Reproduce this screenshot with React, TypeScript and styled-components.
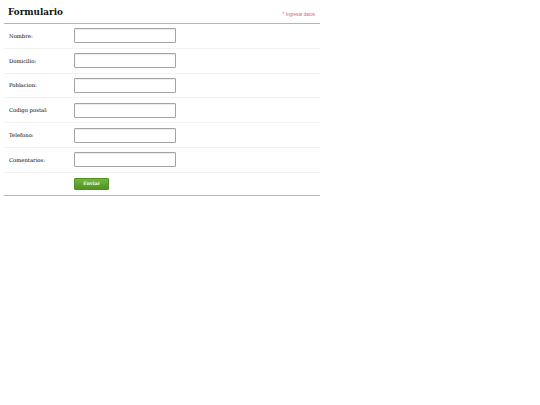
import React from 'react';
import styled, { createGlobalStyle } from 'styled-components';

const GlobalStyle = createGlobalStyle`
  html, body {
    margin: 0;
    padding: 0;
    background: #ffffff;
  }
  body {
    font-family: Georgia, "DejaVu Serif", "Liberation Serif", serif;
  }
`;

const fields = ['Nombre:', 'Domicilio:', 'Poblacion:', 'Codigo postal:', 'Telefono:', 'Comentarios:'];

const App: React.FC = () => {
  return (
    <>
      <GlobalStyle />
      <Page>
        <Form onSubmit={(e) => e.preventDefault()}>
          <Header>
            <Title>Formulario</Title>
            <Hint>* Ingresar datos</Hint>
          </Header>
          {fields.map((label) => (
            <Row key={label}>
              <Label>{label}</Label>
              <Input type="text" />
            </Row>
          ))}
          <ButtonRow>
            <SubmitButton type="submit">Enviar</SubmitButton>
          </ButtonRow>
        </Form>
      </Page>
    </>
  );
};

export default App;

const Page = styled.div`
  padding: 0 4px;
`;

const Form = styled.form`
  width: 316px;
  display: flex;
  flex-direction: column;
  border-bottom: 1px solid #b5b5b5;
`;

const Header = styled.div`
  display: flex;
  align-items: center;
  justify-content: space-between;
  height: 23px;
  padding: 0 5px 0 4px;
  border-bottom: 1px solid #b5b5b5;
`;

const Title = styled.h1`
  margin: 0;
  font-family: "DejaVu Serif", Georgia, serif;
  font-size: 8.8px;
  font-weight: bold;
  color: #111;
`;

const Hint = styled.span`
  font-family: "Liberation Sans", Arial, sans-serif;
  font-size: 4.6px;
  color: #e06666;
  margin-top: 6px;
`;

const Row = styled.div`
  display: grid;
  grid-template-columns: 65px 102px;
  align-items: center;
  box-sizing: border-box;
  height: 24.8px;
  padding-left: 5px;
  border-bottom: 1px solid #f2f2f2;
`;

const Label = styled.label`
  font-family: "DejaVu Serif", Georgia, serif;
  font-size: 5.3px;
  color: #000;
`;

const Input = styled.input`
  box-sizing: border-box;
  width: 102px;
  height: 15px;
  margin: 0;
  padding: 0 3px;
  border: 1px solid #a3a3a3;
  border-radius: 1px;
  box-shadow: inset 0 1px 1px rgba(0, 0, 0, 0.08);
  background: #fff;
  outline: none;
`;

const ButtonRow = styled.div`
  display: flex;
  align-items: center;
  height: 22px;
  padding-left: 70px;
`;

const SubmitButton = styled.button`
  box-sizing: border-box;
  width: 35px;
  height: 12px;
  margin: 0;
  padding: 0;
  border: 1px solid #4f8f25;
  border-radius: 1px;
  background: linear-gradient(#72b73f, #4f9422);
  color: #f4ffe8;
  font-family: "DejaVu Serif", Georgia, serif;
  font-size: 4.6px;
  font-weight: bold;
  cursor: pointer;
`;
